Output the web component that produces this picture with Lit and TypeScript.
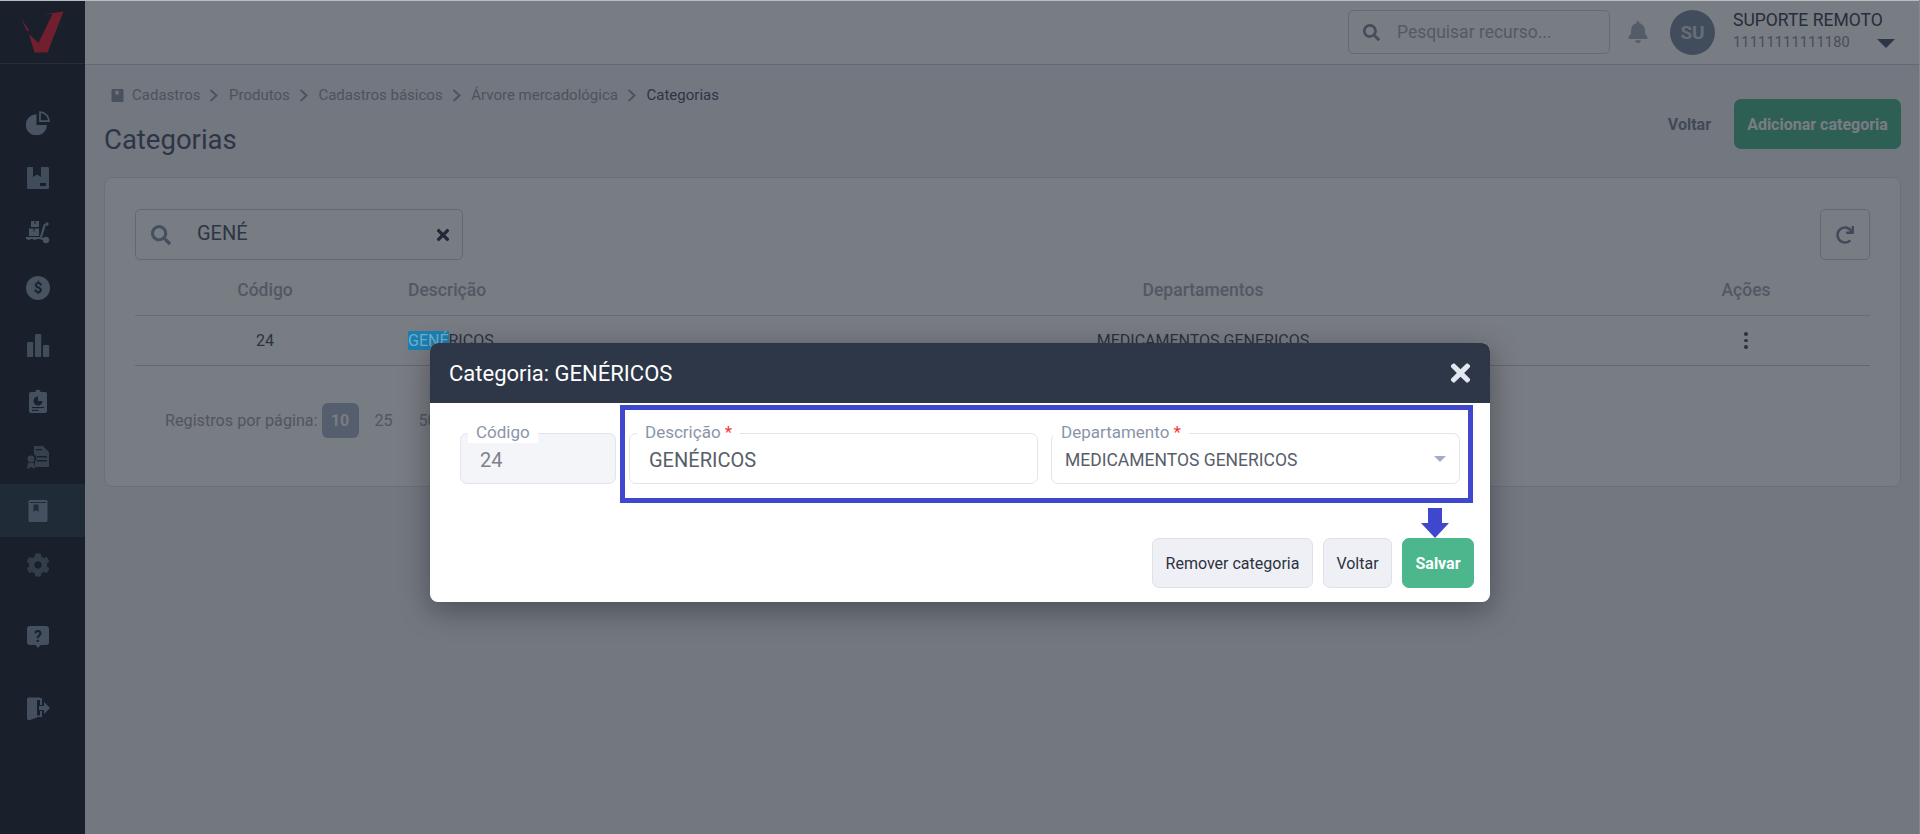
import { LitElement, html, css, svg } from "lit";
import { customElement } from "lit/decorators.js";

const P = {
  search: "M505 442.7L405.3 343c-4.5-4.5-10.6-7-17-7H372c27.6-35.3 44-79.7 44-128C416 93.1 322.9 0 208 0S0 93.1 0 208s93.1 208 208 208c48.3 0 92.7-16.4 128-44v16.3c0 6.4 2.5 12.5 7 17l99.7 99.7c9.4 9.4 24.6 9.4 33.9 0l28.3-28.3c9.4-9.4 9.4-24.6.1-34zM208 336c-70.7 0-128-57.2-128-128 0-70.7 57.2-128 128-128 70.7 0 128 57.2 128 128 0 70.7-57.2 128-128 128z",
  times: "M242.72 256l100.07-100.07c12.28-12.28 12.28-32.19 0-44.48l-22.24-22.24c-12.28-12.28-32.19-12.28-44.48 0L176 189.28 75.93 89.21c-12.28-12.28-32.19-12.28-44.48 0L9.21 111.45c-12.28 12.28-12.28 32.19 0 44.48L109.28 256 9.21 356.07c-12.28 12.28-12.28 32.19 0 44.48l22.24 22.24c12.28 12.28 32.2 12.28 44.48 0L176 322.72l100.07 100.07c12.28 12.28 32.2 12.28 44.48 0l22.24-22.24c12.28-12.28 12.28-32.19 0-44.48L242.72 256z",
  bell: "M224 512c35.32 0 63.97-28.65 63.97-64H160.03c0 35.35 28.65 64 63.97 64zm215.39-149.71c-19.32-20.76-55.47-51.99-55.47-154.29 0-77.7-54.48-139.9-127.94-155.16V32c0-17.67-14.32-32-31.98-32s-31.98 14.33-31.98 32v20.84C118.56 68.1 64.08 130.3 64.08 208c0 102.3-36.15 133.53-55.47 154.29-6 6.45-8.66 14.16-8.61 21.71.11 16.4 12.98 32 32.1 32h383.8c19.12 0 32-15.6 32.1-32 .05-7.55-2.61-15.27-8.61-21.71z",
  cog: "M487.4 315.7l-42.6-24.6c4.3-23.2 4.3-47 0-70.2l42.6-24.6c4.9-2.8 7.1-8.6 5.5-14-11.1-35.6-30-67.8-54.7-94.6-3.8-4.1-10-5.1-14.8-2.3L380.8 110c-17.9-15.4-38.5-27.3-60.8-35.1V25.8c0-5.6-3.9-10.5-9.4-11.7-36.7-8.2-74.3-7.8-109.2 0-5.5 1.2-9.4 6.1-9.4 11.7V75c-22.2 7.9-42.8 19.8-60.8 35.1L88.7 85.5c-4.9-2.8-11-1.9-14.8 2.3-24.7 26.7-43.6 58.9-54.7 94.6-1.7 5.4.6 11.2 5.5 14L67.3 221c-4.3 23.2-4.3 47 0 70.2l-42.6 24.6c-4.9 2.8-7.1 8.6-5.5 14 11.1 35.6 30 67.8 54.7 94.6 3.8 4.1 10 5.1 14.8 2.3l42.6-24.6c17.9 15.4 38.5 27.3 60.8 35.1v49.2c0 5.6 3.9 10.5 9.4 11.7 36.7 8.2 74.3 7.8 109.2 0 5.5-1.2 9.4-6.1 9.4-11.7v-49.2c22.2-7.9 42.8-19.8 60.8-35.1l42.6 24.6c4.9 2.8 11 1.9 14.8-2.3 24.7-26.7 43.6-58.9 54.7-94.6 1.5-5.5-.7-11.3-5.6-14.1zM256 336c-44.1 0-80-35.9-80-80s35.9-80 80-80 80 35.9 80 80-35.9 80-80 80z",
  redo: "M500.33 0h-47.41a12 12 0 0 0-12 12.57l4 82.76A247.42 247.42 0 0 0 256 8C119.34 8 7.9 119.53 8 256.19 8.1 393.07 119.1 504 256 504a247.1 247.1 0 0 0 166.18-63.91 12 12 0 0 0 .48-17.43l-34-34a12 12 0 0 0-16.38-.55A176 176 0 1 1 402.1 157.8l-101.53-4.87a12 12 0 0 0-12.57 12v47.41a12 12 0 0 0 12 12h200.33a12 12 0 0 0 12-12V12a12 12 0 0 0-12-12z",
};

const DARK = "#1a202c";

const sideIcons: Record<string, unknown> = {
  pie: svg`<path d="M10.5 3.2A10.6 10.6 0 1 0 21 14H10.5Z"/><path d="M14 1.2V10.2H23A9 9 0 0 0 14 1.2Z" fill="none" stroke="currentColor" stroke-width="1.7"/>`,
  box: svg`<path fill-rule="evenodd" d="M2 1H7V11L11 8.5L15 11V1H21A1.5 1.5 0 0 1 23 2.5V21.5A1.5 1.5 0 0 1 21.5 23H2.5A1.5 1.5 0 0 1 1 21.5V2.5A1.5 1.5 0 0 1 2 1ZM14 17V20H20V17Z"/>`,
  dolly: svg`<path d="M5 0H8.5V3H9.5V0H13V6H5ZM3 7.5H7.5V10.5H8.5V7.5H13V15H3Z"/><path d="M0 16H14V18H10.5A2 2 0 0 1 7 18H4.5A2 2 0 0 1 1 18H0Z"/><path d="M19 3.2L15 16" stroke="currentColor" stroke-width="2.2" fill="none"/><circle cx="21" cy="3" r="1.7"/><circle cx="20" cy="19" r="3.2"/><path d="M14 17L20 19" stroke="currentColor" stroke-width="2"/>`,
  dollar: svg`<circle cx="12" cy="12" r="12"/><text x="12" y="17.4" text-anchor="middle" font-family="Roboto" font-weight="700" font-size="15" fill="${DARK}">$</text>`,
  bars: svg`<rect x="1" y="9" width="6.2" height="15" rx="1.2"/><rect x="9" y="1" width="6.2" height="23" rx="1.2"/><rect x="17" y="12" width="6.2" height="12" rx="1.2"/>`,
  clip: svg`<path d="M5 3H9.5A2 2 0 0 1 11.5 .8H12.5A2 2 0 0 1 14.5 3H19A2 2 0 0 1 21 5V22A2 2 0 0 1 19 24H5A2 2 0 0 1 3 22V5A2 2 0 0 1 5 3Z"/><path d="M12 7.5A4.5 4.5 0 1 0 16.5 12H12Z" fill="${DARK}"/><rect x="6" y="18" width="12" height="1.1" fill="${DARK}"/><rect x="6" y="20.8" width="6.5" height="1.1" fill="${DARK}"/>`,
  cert: svg`<path d="M8 1H17L23 7V22H9V17A5 5 0 0 0 8 9ZM10 4V5.2H16V4ZM11 11V12.4H21V11ZM11 15V16.4H21V15Z" fill-rule="evenodd"/><circle cx="5" cy="14" r="3.4"/><path d="M2 18L1 24L5 22L9 24L8 18Z"/>`,
  book: svg`<path fill-rule="evenodd" d="M4 1H20A1.5 1.5 0 0 1 21.5 2.5V21.5A1.5 1.5 0 0 1 20 23H4A1.5 1.5 0 0 1 2.5 21.5V2.5A1.5 1.5 0 0 1 4 1ZM4 3V3.9H20V3ZM7.5 5.5V13L10 11L12.5 13V5.5Z"/>`,
  help: svg`<path d="M4 1H20A3 3 0 0 1 23 4V17A3 3 0 0 1 20 20H14.5L12 23L9.5 20H4A3 3 0 0 1 1 17V4A3 3 0 0 1 4 1Z"/><text x="12" y="16.5" text-anchor="middle" font-family="Roboto" font-weight="700" font-size="16" fill="${DARK}">?</text>`,
  exit: svg`<path d="M1 3A1.5 1.5 0 0 1 2.5 1.5H14V4H11V21.6L4 24A2 2 0 0 1 1 22Z"/><path d="M9.5 2H16V9H14V4H9.5Z"/><path d="M14 15H16V21H11V19.5H14Z"/><path d="M13 10H18V6L24 12L18 18V14H13Z"/>`,
};

const NAV = [
  { k: "pie", h: 54, c: "#8e9fb2" },
  { k: "box", h: 55, c: "#7a8a9d" },
  { k: "dolly", h: 55, c: "#8a9bae" },
  { k: "dollar", h: 56, c: "#8a9bae" },
  { k: "bars", h: 57, c: "#7a8a9d" },
  { k: "clip", h: 56, c: "#8295a8" },
  { k: "cert", h: 55, c: "#62707f" },
  { k: "book", h: 53, c: "#8295a8", active: true },
  { k: "cog", h: 55, c: "#596676" },
];

@customElement("app-root")
export class AppRoot extends LitElement {
  static styles = css`
    :host { display: block; position: relative; width: 1920px; height: 834px; overflow: hidden; font-family: Roboto, sans-serif; background: #f0f3f7; color: #4a5568; }
    * { box-sizing: border-box; }
    .shell { display: flex; height: 834px; }
    .side { width: 85px; flex: none; background: #1a202c; display: flex; flex-direction: column; }
    .logo { height: 64px; border-bottom: 1px solid #3a4252; display: flex; align-items: flex-start; }
    .logo svg { display: block; }
    .nav { padding-top: 32px; display: flex; flex-direction: column; }
    .item { display: flex; align-items: center; justify-content: center; }
    .item svg { width: 24px; height: 24px; display: block; margin-left: -10px; }
    .item.active { background: #283d49; }
    .item.sep { margin-top: 18px; height: 53px; }
    .main { flex: 1; min-width: 0; display: flex; flex-direction: column; }
    .top { height: 65px; flex: none; background: #fff; border-bottom: 1px solid #cbd0d8; display: flex; align-items: center; padding-right: 24px; }
    .tsearch { margin-left: auto; width: 262px; height: 44px; border: 1px solid #cfd4dc; border-radius: 5px; display: flex; align-items: center; padding-left: 14px; gap: 17px; color: #a8adb5; font-size: 17.5px; }
    .tsearch svg { width: 17px; height: 17px; color: #828b9a; display: block; }
    .bell { width: 20px; height: 22px; margin-left: 18px; color: #a8b2c0; display: block; }
    .avatar { width: 45px; height: 45px; border-radius: 50%; background: #7b8ba0; color: #d5dbe3; font-weight: 700; font-size: 19px; display: flex; align-items: center; justify-content: center; margin-left: 22px; }
    .user { margin-left: 18px; width: 163px; position: relative; }
    .uname { font-size: 17.5px; color: #3a4150; line-height: 19px; white-space: nowrap; }
    .udoc { font-size: 14.5px; color: #8b909a; line-height: 20px; letter-spacing: .2px; margin-top: 3px; }
    .caret { position: absolute; right: 1px; bottom: 5px; width: 0; height: 0; border-left: 9px solid transparent; border-right: 9px solid transparent; border-top: 9px solid #4a5568; }
    .content { flex: 1; padding: 20px 19px 0 19px; }
    .phead { display: flex; justify-content: space-between; height: 92px; }
    .crumbs { display: flex; align-items: center; height: 20px; font-size: 15px; color: #989ca3; padding-left: 7px; }
    .crumbs svg.bk { width: 13px; height: 13px; color: #8c96a3; margin-right: 8px; display: block; }
    .crumbs .ch { width: 9px; height: 13px; margin: 0 10.6px 0 9px; color: #989ca3; display: block; }
    .crumbs .last { color: #4a5568; }
    .title { font-size: 27.5px; font-weight: 400; color: #4a5568; margin: 17px 0 0; line-height: 36px; }
    .acts { display: flex; align-items: center; gap: 23px; margin-top: 14px; height: 50px; }
    .link { font-weight: 700; font-size: 16px; color: #7a8494; }
    .btn { height: 50px; border-radius: 7px; display: flex; align-items: center; justify-content: center; font-size: 16px; font-weight: 700; }
    .green { background: #4cb88f; color: #fff; }
    .card { background: #fff; border: 1px solid #dde1e7; border-radius: 8px; height: 310px; padding: 31px 30px 0; }
    .crow { display: flex; justify-content: space-between; }
    .fsearch { width: 328px; height: 51px; border: 1px solid #cdd2da; border-radius: 5px; display: flex; align-items: center; padding: 0 12px 0 15px; }
    .fsearch .s { width: 20px; height: 20px; color: #8494a8; display: block; }
    .fsearch span { font-size: 20px; color: #4a5568; margin-left: 26px; flex: 1; position: relative; top: -2px; }
    .fsearch .x { width: 14px; height: 18px; color: #2d3748; display: block; }
    .refresh { width: 50px; height: 51px; border: 1px solid #cdd2da; border-radius: 5px; display: flex; align-items: center; justify-content: center; }
    .refresh svg { width: 18px; height: 18px; color: #7a8698; display: block; }
    .grid { display: grid; grid-template-columns: 260px 389px 838px 248px; }
    .th { height: 56px; padding-top: 19px; font-size: 17.5px; font-weight: 500; color: #a4a9b1; line-height: 22px; border-bottom: 1px solid #d5d9df; }
    .td { height: 50px; font-size: 16px; color: #454d5c; border-bottom: 1px solid #c9ced6; display: flex; align-items: center; }
    .c { text-align: center; justify-content: center; }
    .pl { padding-left: 13px; }
    .mark { background: #1c7fb0; color: #6fb0cf; position: relative; z-index: 51; }
    .dots { display: flex; flex-direction: column; gap: 3px; }
    .dots i { width: 3.5px; height: 3.5px; background: #4a5568; border-radius: 50%; display: block; }
    .pag { display: flex; align-items: center; margin-top: 36px; padding-left: 30px; font-size: 16.2px; color: #a0a4ab; height: 36px; }
    .pag b { width: 37px; height: 35px; background: #a9b6c9; color: #fff; border-radius: 6px; display: flex; align-items: center; justify-content: center; font-size: 16px; margin-left: 4px; }
    .pag span { width: 50px; text-align: center; }
    .pag span + span { width: 38px; }
    .backdrop { position: absolute; inset: 0; background: rgba(26, 32, 44, .59); z-index: 50; }
    .strip { position: absolute; left: 0; right: 0; top: 0; height: 1px; background: #b9bcc1; z-index: 60; }
    .stripr { position: absolute; right: 0; top: 0; bottom: 0; width: 1px; background: #85888f; z-index: 60; }
    .layer { position: absolute; inset: 0; z-index: 52; display: flex; justify-content: center; padding-top: 343px; }
    .modal { position: relative; width: 1060px; height: 259px; background: #fff; border-radius: 8px; box-shadow: 0 8px 30px rgba(0, 0, 0, .35); display: flex; flex-direction: column; }
    .mhead { height: 60px; flex: none; background: #2d3748; color: #fff; border-radius: 8px 8px 0 0; display: flex; align-items: center; justify-content: space-between; padding: 0 19px; font-size: 22px; font-weight: 400; }
    .mhead svg { width: 21px; height: 28px; color: #e2e8f0; display: block; }
    .mbody { padding: 30px 30px 0 30px; }
    .fields { display: grid; grid-template-columns: 156px 409px 409px; gap: 13px; }
    .field { position: relative; height: 51px; border: 1px solid #e1e4ec; border-radius: 7px; display: flex; align-items: center; padding-left: 19px; font-size: 20px; color: #585e69; padding-top: 2px; }
    .field.ro { background: #f4f5f9; color: #7c828d; }
    .field.sel { font-size: 17.5px; padding-left: 13px; }
    .lab { position: absolute; left: 7px; top: -13px; height: 22px; line-height: 22px; background: #fff; padding: 0 8px; font-size: 17px; color: #8a94a9; }
    .sel .lab { left: 1px; }
    .lab em { color: #f03a3a; font-style: normal; }
    .selc { position: absolute; right: 13px; top: 22px; width: 0; height: 0; border-left: 6px solid transparent; border-right: 6px solid transparent; border-top: 6px solid #a3adc6; }
    .foot { display: flex; justify-content: flex-end; gap: 10px; margin-top: 54px; margin-right: -14px; }
    .mbtn { height: 50px; border-radius: 7px; display: flex; align-items: center; justify-content: center; font-size: 16px; font-weight: 400; color: #2d3240; background: #eff0f5; border: 1px solid #dfe1e8; }
    .mbtn.rm { width: 161px; }
    .mbtn.vt { width: 69px; }
    .mbtn.sv { width: 72px; background: #4cb68d; border-color: #4cb68d; color: #fff; font-weight: 700; }
    .hl { position: absolute; left: 190px; top: 62px; width: 853px; height: 98px; border: 5px solid #3f48cc; pointer-events: none; }
    .arrow { position: absolute; left: 991px; top: 165px; width: 28px; height: 30px; display: block; }
  `;

  private crumb(t: string) {
    return html`<span>${t}</span><svg class="ch" viewBox="0 0 9 13"><path d="M1.5 1L7.5 6.5L1.5 12" fill="none" stroke="currentColor" stroke-width="2"/></svg>`;
  }

  private sideIcon(k: string) {
    if (k === "cog") return svg`<path transform="scale(.0469)" d="${P.cog}"/>`;
    return sideIcons[k];
  }

  render() {
    return html`
      <div class="shell">
        <aside class="side">
          <div class="logo">
            <svg width="85" height="63" viewBox="0 0 85 63">
              <path fill="#ee1e31" d="M63.5 11.5L43 14.5L52.5 14L38.5 43L29 34L34.5 52.5H47.5Z"/>
              <path fill="#ee1e31" d="M21.5 19L29.5 31L26.5 30.5Z"/>
            </svg>
          </div>
          <nav class="nav">
            ${NAV.map(
              (n) => html`<div class="item ${n.active ? "active" : ""}" style="height:${n.h}px;color:${n.c}">
                <svg viewBox="0 0 24 24" fill="currentColor">${this.sideIcon(n.k)}</svg>
              </div>`
            )}
            <div class="item sep" style="color:#8295a8"><svg viewBox="0 0 24 24" fill="currentColor">${sideIcons.help}</svg></div>
            <div class="item sep" style="color:#8295a8"><svg viewBox="0 0 24 24" fill="currentColor">${sideIcons.exit}</svg></div>
          </nav>
        </aside>
        <div class="main">
          <header class="top">
            <div class="tsearch"><svg viewBox="0 0 512 512" fill="currentColor"><path d="${P.search}"/></svg>Pesquisar recurso...</div>
            <svg class="bell" viewBox="0 0 448 512" fill="currentColor"><path d="${P.bell}"/></svg>
            <div class="avatar">SU</div>
            <div class="user">
              <div class="uname">SUPORTE REMOTO</div>
              <div class="udoc">11111111111180</div>
              <div class="caret"></div>
            </div>
          </header>
          <main class="content">
            <div class="phead">
              <div>
                <div class="crumbs">
                  <svg class="bk" viewBox="0 0 24 24" fill="currentColor"><path fill-rule="evenodd" d="M3 0H21A2 2 0 0 1 23 2V22A2 2 0 0 1 21 24H3A2 2 0 0 1 1 22V2A2 2 0 0 1 3 0ZM8 3V11L11 9L14 11V3Z"/></svg>
                  ${this.crumb("Cadastros")}${this.crumb("Produtos")}${this.crumb("Cadastros básicos")}${this.crumb("Árvore mercadológica")}
                  <span class="last">Categorias</span>
                </div>
                <h1 class="title">Categorias</h1>
              </div>
              <div class="acts">
                <span class="link">Voltar</span>
                <div class="btn green" style="width:167px">Adicionar categoria</div>
              </div>
            </div>
            <section class="card">
              <div class="crow">
                <div class="fsearch">
                  <svg class="s" viewBox="0 0 512 512" fill="currentColor"><path d="${P.search}"/></svg>
                  <span>GENÉ</span>
                  <svg class="x" viewBox="0 0 352 512" fill="currentColor"><path d="${P.times}"/></svg>
                </div>
                <div class="refresh"><svg viewBox="0 0 512 512" fill="currentColor"><path d="${P.redo}"/></svg></div>
              </div>
              <div class="grid">
                <div class="th c">Código</div>
                <div class="th pl">Descrição</div>
                <div class="th c">Departamentos</div>
                <div class="th c">Ações</div>
                <div class="td c">24</div>
                <div class="td pl"><span class="mark">GENÉ</span>RICOS</div>
                <div class="td c">MEDICAMENTOS GENERICOS</div>
                <div class="td c"><div class="dots"><i></i><i></i><i></i></div></div>
              </div>
              <div class="pag">Registros por página:<b>10</b><span>25</span><span>50</span></div>
            </section>
          </main>
        </div>
      </div>
      <div class="backdrop"></div>
      <div class="strip"></div>
      <div class="stripr"></div>
      <div class="layer">
        <div class="modal">
          <div class="mhead">
            <span>Categoria: GENÉRICOS</span>
            <svg viewBox="0 0 352 512" fill="currentColor"><path d="${P.times}"/></svg>
          </div>
          <div class="mbody">
            <div class="fields">
              <div class="field ro"><span class="lab">Código</span>24</div>
              <div class="field"><span class="lab">Descrição <em>*</em></span>GENÉRICOS</div>
              <div class="field sel"><span class="lab">Departamento <em>*</em></span>MEDICAMENTOS GENERICOS<span class="selc"></span></div>
            </div>
            <div class="foot">
              <div class="mbtn rm">Remover categoria</div>
              <div class="mbtn vt">Voltar</div>
              <div class="mbtn sv">Salvar</div>
            </div>
          </div>
          <div class="hl"></div>
          <svg class="arrow" viewBox="0 0 28 30"><path fill="#3f48cc" d="M7 0H21V15H28L14 30L0 15H7Z"/></svg>
        </div>
      </div>
    `;
  }
}
